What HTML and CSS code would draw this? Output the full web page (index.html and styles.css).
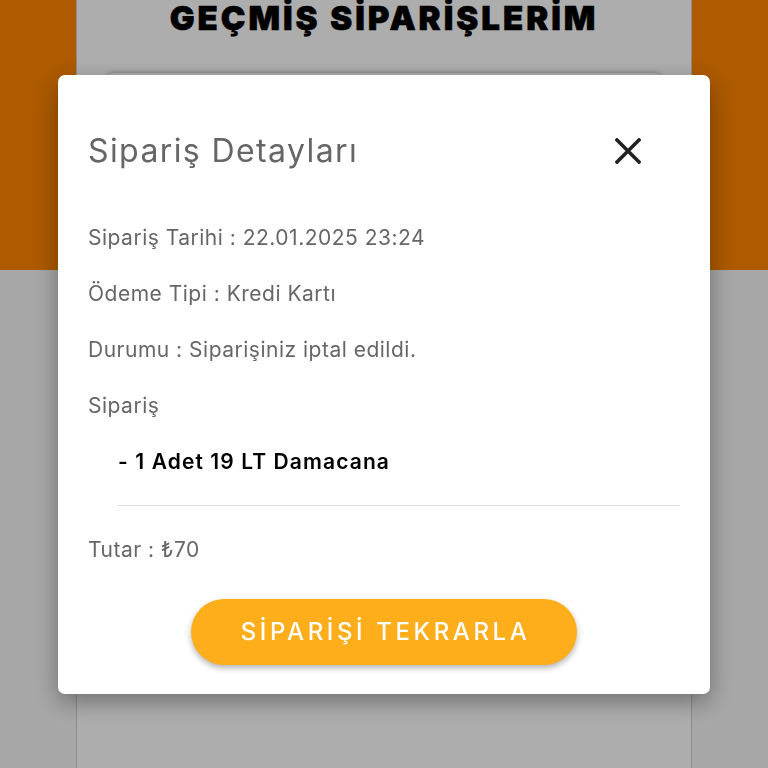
FILE: index.html
```html
<!DOCTYPE html>
<html lang="tr">
<head>
<meta charset="utf-8">
<title>Geçmiş Siparişlerim</title>
<link rel="stylesheet" href="styles.css">
</head>
<body>
<div class="page">
  <main class="column">
    <h1 class="page-title">GEÇMİŞ SİPARİŞLERİM</h1>
    <div class="order-card"></div>
  </main>
</div>

<div class="overlay">
  <section class="modal">
    <header class="modal-head">
      <h2 class="modal-title">Sipariş Detayları</h2>
      <button class="close-btn" aria-label="Kapat">
        <svg width="26" height="26" viewBox="0 0 26 26"><path d="M2 2 L24 24 M24 2 L2 24" stroke="#222" stroke-width="3.6" stroke-linecap="square" fill="none"/></svg>
      </button>
    </header>
    <div class="modal-body">
      <p class="row">Sipariş Tarihi : 22.01.2025 23:24</p>
      <p class="row">Ödeme Tipi : Kredi Kartı</p>
      <p class="row">Durumu : Siparişiniz iptal edildi.</p>
      <p class="row">Sipariş</p>
      <p class="item">- 1 Adet 19 LT Damacana</p>
      <hr class="divider">
      <p class="row">Tutar : ₺70</p>
      <div class="actions">
        <button class="repeat-btn">SİPARİŞİ TEKRARLA</button>
      </div>
    </div>
  </section>
</div>
</body>
</html>
```

FILE: styles.css
```css
* { box-sizing: border-box; }
html, body { margin: 0; padding: 0; }
body {
  font-family: "Inter", "Noto Sans", sans-serif;
  width: 768px;
  height: 768px;
  overflow: hidden;
}
.page {
  height: 768px;
  background: linear-gradient(#ff8500 0, #ff8500 270px, #f6f6f6 270px);
}
.column {
  width: 616px;
  margin: 0 auto;
  height: 768px;
  background: #ffffff;
  border-left: 1px solid #cfcfcf;
  border-right: 1px solid #cfcfcf;
}
.page-title {
  margin: 0;
  height: 73px;
  line-height: 36px;
  text-align: center;
  font-size: 33px;
  font-weight: 900;
  color: #000;
  letter-spacing: 3px;
  -webkit-text-stroke: 0.6px #000;
}
.order-card {
  margin: 0 30px;
  height: 300px;
  background: #fff;
  border-radius: 6px;
  box-shadow: 0 -1px 4px rgba(0,0,0,0.25);
}
.overlay {
  position: fixed;
  inset: 0;
  background: rgba(0,0,0,0.32);
  display: flex;
  align-items: center;
  justify-content: center;
}
.modal {
  width: 652px;
  height: 619px;
  background: #fff;
  border-radius: 7px;
  box-shadow: 0 8px 24px rgba(0,0,0,0.35);
  padding: 48px 30px 29px;
}
.modal-head {
  display: flex;
  align-items: center;
  justify-content: space-between;
  height: 56px;
  padding-right: 39px;
}
.modal-title {
  margin: 0;
  font-size: 32px;
  font-weight: 400;
  letter-spacing: 1.4px;
  color: #666666;
}
.close-btn {
  border: 0;
  background: none;
  padding: 0;
  width: 26px;
  height: 26px;
  display: flex;
}
.modal-body {
  margin-top: 31px;
}
.row {
  margin: 0;
  height: 56px;
  line-height: 56px;
  font-size: 21px;
  letter-spacing: 0.5px;
  color: #666666;
}
.item {
  margin: 0;
  padding-left: 30px;
  height: 56px;
  line-height: 56px;
  font-size: 21px;
  font-weight: 600;
  letter-spacing: 1.1px;
  color: #000;
}
.divider {
  margin: 15px 0 16px 30px;
  border: 0;
  border-top: 1.5px solid #dedede;
}
.actions {
  display: flex;
  justify-content: center;
  margin-top: 21px;
}
.repeat-btn {
  width: 386px;
  height: 66px;
  border: 0;
  border-radius: 33px;
  background: #fdae1a;
  color: #fff;
  font-family: inherit;
  font-size: 24px;
  font-weight: 500;
  letter-spacing: 3.6px;
  padding: 0 0 0 3px;
  box-shadow: 0 3px 6px rgba(0,0,0,0.3);
}
```
